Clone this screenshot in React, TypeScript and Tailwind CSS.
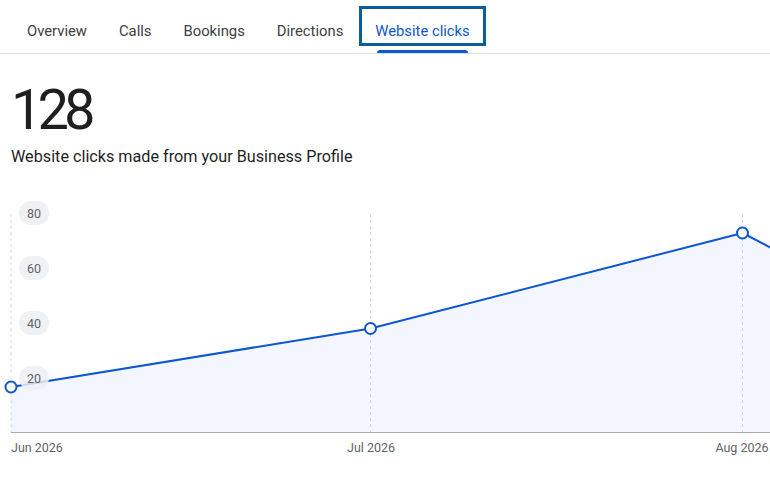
const tabs = ["Overview", "Calls", "Bookings", "Directions", "Website clicks"];

const points = [
  { x: 11, y: 388 },
  { x: 370.5, y: 329.5 },
  { x: 742.5, y: 234 },
  { x: 800, y: 264 },
];

const yTicks = [
  { label: "80", y: 214 },
  { label: "60", y: 269 },
  { label: "40", y: 324 },
  { label: "20", y: 379 },
];

function Chart() {
  const base = 433.5;
  const line = points.map((p, i) => `${i === 0 ? "M" : "L"}${p.x} ${p.y}`).join(" ");
  const area = `${line} L800 ${base} L11 ${base} Z`;
  return (
    <svg width="770" height="302" viewBox="0 190 770 302" className="block">
      <path d={area} fill="#f3f6fe" />
      {[11, 370.5, 742.5].map((x) => (
        <line key={x} x1={x} x2={x} y1={215} y2={base} stroke="#d6d8dc" strokeWidth="1" strokeDasharray="3 3" />
      ))}
      <line x1={11} x2={770} y1={base} y2={base} stroke="#a6a9ae" strokeWidth="1" />
      <path d={line} fill="none" stroke="#0b57d0" strokeWidth="2" strokeLinejoin="round" />
      {yTicks.map((t) => (
        <g key={t.label}>
          <rect x={19} y={t.y - 12} width={30} height={24} rx={12} fill="#eceef3" fillOpacity="0.85" />
          <text x={34} y={t.y + 4.5} textAnchor="middle" fontSize="12.5" fill="#5f6368" fontFamily="Roboto, sans-serif">
            {t.label}
          </text>
        </g>
      ))}
      {points.slice(0, 3).map((p) => (
        <circle key={p.x} cx={p.x} cy={p.y} r={5.5} fill="#fff" stroke="#0b57d0" strokeWidth="2" />
      ))}
      <g fontSize="12.5" fill="#5f6368" fontFamily="Roboto, sans-serif">
        <text x={11} y={453}>Jun 2026</text>
        <text x={371} y={453} textAnchor="middle">Jul 2026</text>
        <text x={742} y={453} textAnchor="middle">Aug 2026</text>
      </g>
    </svg>
  );
}

export default function App() {
  return (
    <div className="w-[770px] h-[492px] overflow-hidden bg-white font-['Roboto',sans-serif]">
      <nav className="flex pt-[6px] pl-[11px] border-b border-[#dadce0]">
        {tabs.map((tab) => {
          const active = tab === "Website clicks";
          return (
            <div key={tab} className="relative h-[47px] px-4 pt-[13px]">
              <span className={`text-[14.8px] leading-[20px] ${active ? "text-[#0b57d0]" : "text-[#3c4043]"}`}>
                {tab}
              </span>
              {active && (
                <>
                  <div className="absolute left-0 right-0 top-0 h-[40px] border-[3px] border-[#0b5e9e]" />
                  <div className="absolute left-[18px] right-[18px] bottom-0 h-[3px] rounded-t-[3px] bg-[#0b57d0]" />
                </>
              )}
            </div>
          );
        })}
      </nav>
      <div className="px-[11px]">
        <h1 className="mt-[28px] text-[56px] leading-[57px] font-normal text-[#1f1f1f] tracking-[-5px]">128</h1>
        <p className="mt-[6px] text-[16.2px] leading-[24px] text-[#1f1f1f]">
          Website clicks made from your Business Profile
        </p>
      </div>
      <div className="mt-[20px]">
        <Chart />
      </div>
    </div>
  );
}
